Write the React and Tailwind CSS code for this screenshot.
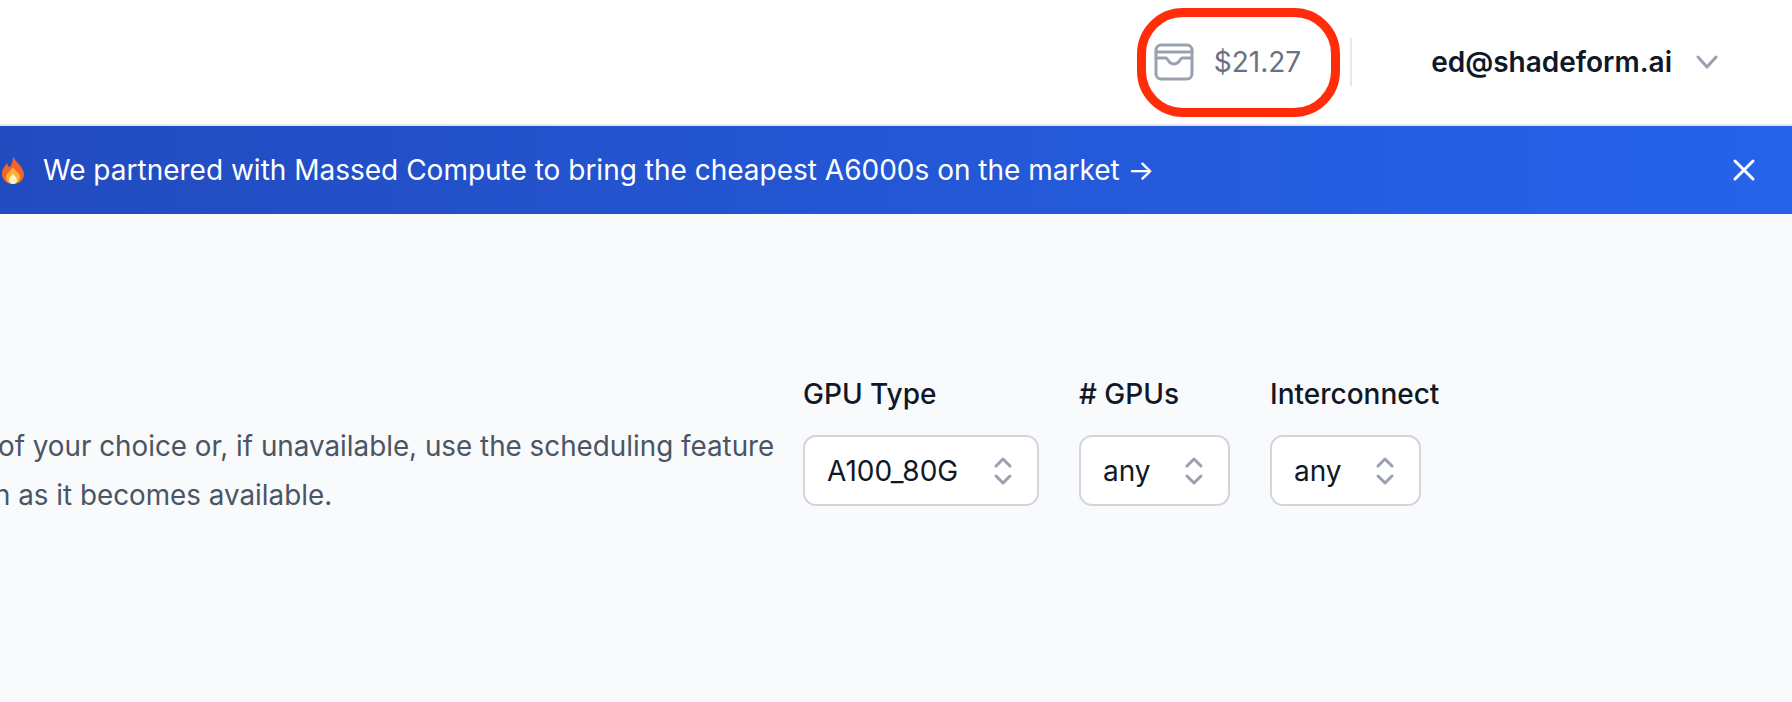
export default function App() {
  const Chevrons = () => (
    <svg className="w-[20px] h-[30px] text-gray-400" viewBox="0 0 20 30" fill="none" stroke="currentColor" strokeWidth="3" strokeLinecap="round" strokeLinejoin="round">
      <path d="M3 10 L10 3 L17 10" />
      <path d="M3 20 L10 27 L17 20" />
    </svg>
  );
  const Select = ({ label, value, width }) => (
    <div className="flex flex-col gap-[21px]">
      <div className="text-[28px] leading-[40px] font-medium text-gray-900 whitespace-nowrap">{label}</div>
      <div className={`flex items-center justify-between h-[71px] rounded-[13px] border-2 border-gray-300 bg-white pl-[22px] pr-[24px] text-[28px] text-gray-900 ${width}`}>
        <span>{value}</span>
        <Chevrons />
      </div>
    </div>
  );
  return (
    <div className="relative w-[1792px] h-[702px] overflow-hidden bg-gray-50 font-['Inter',sans-serif]">
      <header className="flex items-center justify-end h-[126px] bg-white border-b-2 border-gray-200 pr-[74px]">
        <div className="flex items-center gap-[20px]">
          <svg className="w-[40px] h-[38px] text-gray-400" viewBox="0 0 40 38" fill="none" stroke="currentColor" strokeWidth="3" strokeLinecap="round" strokeLinejoin="round">
            <rect x="2" y="2" width="36" height="34" rx="5" />
            <path d="M2 9 H38" />
            <path d="M2 15 H12 C14 15 14 21 20 21 C26 21 26 15 28 15 H38" />
          </svg>
          <span className="text-[28px] text-gray-500">$21.27</span>
        </div>
        <div className="w-[2px] h-[48px] bg-gray-200 ml-[49px] mr-[79px]" />
        <span className="text-[28px] font-semibold text-gray-900">ed@shadeform.ai</span>
        <svg className="ml-[24px] w-[22px] h-[14px] text-gray-400" viewBox="0 0 22 14" fill="none" stroke="currentColor" strokeWidth="3" strokeLinecap="round" strokeLinejoin="round">
          <path d="M2 2 L11 12 L20 2" />
        </svg>
      </header>
      <div className="flex items-center justify-between h-[88px] bg-linear-to-r from-[#224bbf] to-[#2563eb] pl-[1px] pr-[36px] text-white">
        <div className="flex items-center gap-[18px] text-[28px] whitespace-nowrap">
          <svg className="w-[24px] h-[30px]" viewBox="0 0 24 28">
            <path d="M12 0 C14 6 22 10 23 18 C23 24 18 28 12 28 C6 28 1 24 1 18 C1 13 4 10 6 7 C7 10 8 11 9 11 C11 8 12 4 12 0 Z" fill="#f2652a" />
            <path d="M12 11 C14 15 19 17 19 21 C19 25 16 28 12 28 C8 28 5 25 5 21 C5 18 9 16 12 11 Z" fill="#fbb03b" />
            <path d="M12 18 C14 20 16 22 16 24 C16 26.500 14 28 12 28 C10 28 8 26.500 8 24 C8 22 10 20 12 18 Z" fill="#fff3c4" />
          </svg>
          <span>We partnered with Massed Compute to bring the cheapest A6000s on the market →</span>
        </div>
        <svg className="w-[24px] h-[24px]" viewBox="0 0 24 24" fill="none" stroke="currentColor" strokeWidth="3" strokeLinecap="round">
          <path d="M3 3 L21 21 M21 3 L3 21" />
        </svg>
      </div>
      <main className="flex items-start pt-[160px]">
        <div className="w-[795px] shrink-0 mt-[48px] text-[27.8px] leading-[49px] text-gray-600 whitespace-nowrap">
          <div className="-ml-[2px]">of your choice or, if unavailable, use the scheduling feature</div>
          <div className="-ml-[6px]">n as it becomes available.</div>
        </div>
        <div className="flex gap-[40px] ml-[8px]">
          <Select label="GPU Type" value="A100_80G" width="w-[236px]" />
          <Select label="# GPUs" value="any" width="w-[151px]" />
          <Select label="Interconnect" value="any" width="w-[151px]" />
        </div>
      </main>
      <div className="absolute left-[1137px] top-[8px] w-[203px] h-[109px] rounded-[46px] border-[9px] border-[#ff2d0a]" />
    </div>
  );
}
